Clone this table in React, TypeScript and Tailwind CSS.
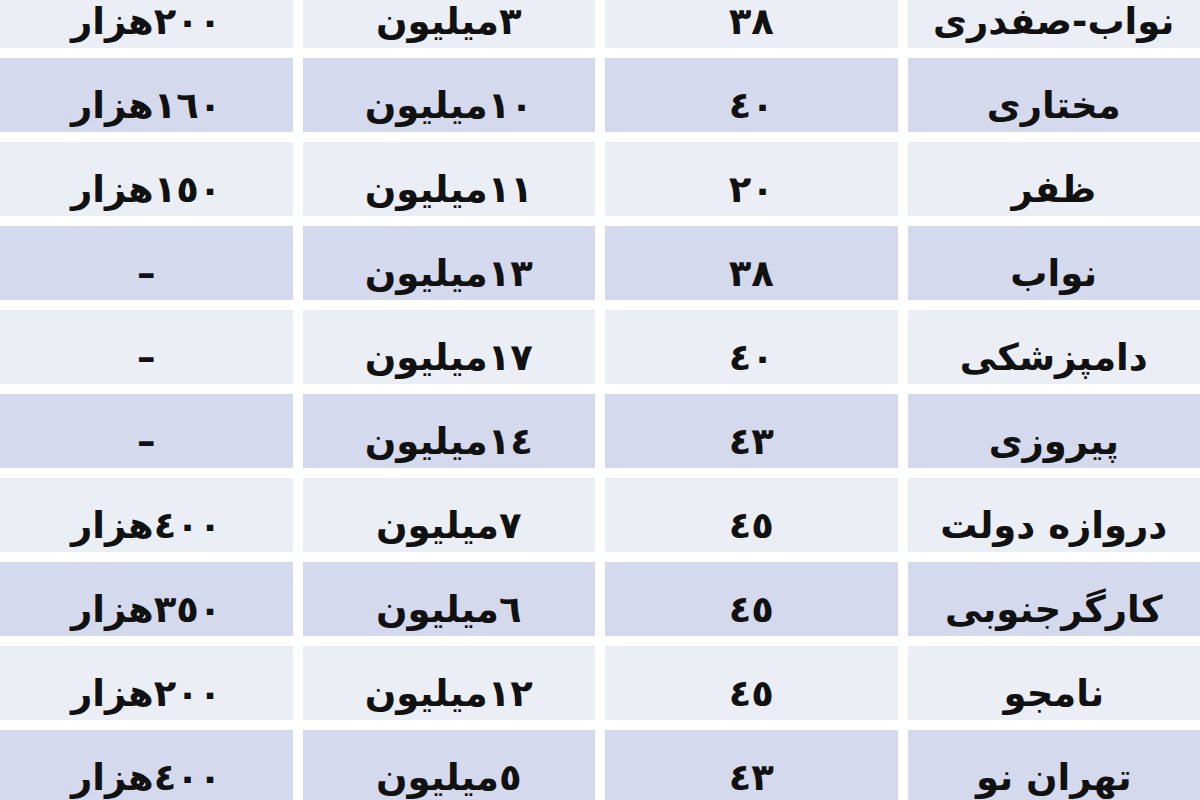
const rows = [
  { name: "نواب-صفدری", area: "٣٨", price: "٣میلیون", rent: "٢٠٠هزار" },
  { name: "مختاری", area: "٤٠", price: "١٠میلیون", rent: "١٦٠هزار" },
  { name: "ظفر", area: "٢٠", price: "١١میلیون", rent: "١٥٠هزار" },
  { name: "نواب", area: "٣٨", price: "١٣میلیون", rent: "–" },
  { name: "دامپزشکی", area: "٤٠", price: "١٧میلیون", rent: "–" },
  { name: "پیروزی", area: "٤٣", price: "١٤میلیون", rent: "–" },
  { name: "دروازه دولت", area: "٤٥", price: "٧میلیون", rent: "٤٠٠هزار" },
  { name: "کارگرجنوبی", area: "٤٥", price: "٦میلیون", rent: "٣٥٠هزار" },
  { name: "نامجو", area: "٤٥", price: "١٢میلیون", rent: "٢٠٠هزار" },
  { name: "تهران نو", area: "٤٣", price: "٥میلیون", rent: "٤٠٠هزار" },
];

export default function App() {
  return (
    <main className="w-[1200px] h-[800px] overflow-hidden bg-white">
      <div
        dir="rtl"
        className="-mt-[26px] grid grid-cols-4 gap-x-[10px] gap-y-[10px] auto-rows-[74px] font-['DejaVu_Sans',sans-serif] font-bold text-[37px] text-[#111]"
      >
        {rows.map((r, i) => {
          const bg = i % 2 === 0 ? "bg-[#eceef6]" : "bg-[#d5d9ee]";
          return [r.name, r.area, r.price, r.rent].map((cell, j) => (
            <div key={`${i}-${j}`} className={`${bg} flex items-center justify-center pt-[22px]`}>
              {cell}
            </div>
          ));
        })}
      </div>
    </main>
  );
}
